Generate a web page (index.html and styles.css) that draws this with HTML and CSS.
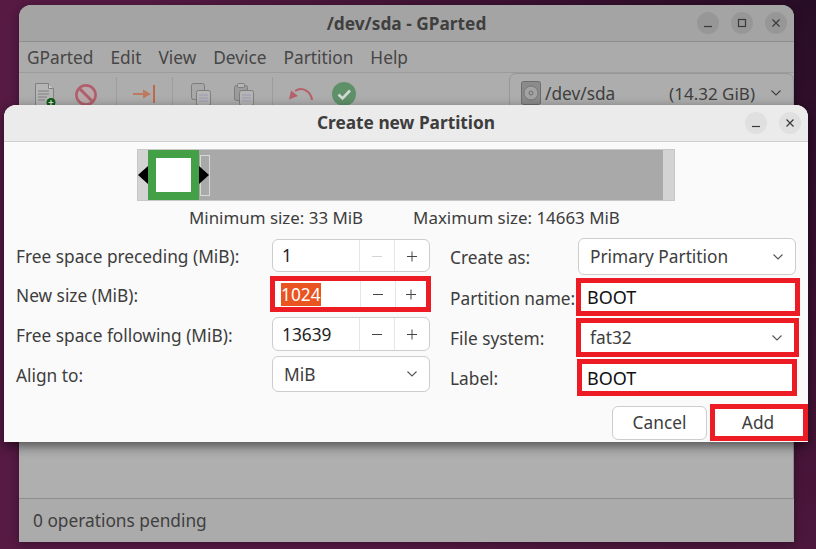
FILE: index.html
```html
<!DOCTYPE html>
<html lang="en">

<head>
    <meta charset="UTF-8">
    <title>/dev/sda - GParted</title>
    <link rel="stylesheet" href="styles.css">
</head>

<body>
    <div class="desktop">
        <div class="main-window">
            <div class="main-title">
                <span class="main-title-text">/dev/sda - GParted</span>
                <div class="win-buttons">
                    <span class="win-btn dark"><svg width="12" height="12" viewBox="0 0 12 12"><path d="M2 9.5h8" stroke="#3a3a3a" stroke-width="1.2"/></svg></span>
                    <span class="win-btn dark"><svg width="12" height="12" viewBox="0 0 12 12"><rect x="2.5" y="2.5" width="7" height="7" fill="none" stroke="#3a3a3a" stroke-width="1.2"/></svg></span>
                    <span class="win-btn dark"><svg width="12" height="12" viewBox="0 0 12 12"><path d="M2.5 2.5l7 7M9.5 2.5l-7 7" stroke="#3a3a3a" stroke-width="1.2"/></svg></span>
                </div>
            </div>
            <div class="menubar">
                <span>GParted</span><span>Edit</span><span>View</span><span>Device</span><span>Partition</span><span>Help</span>
            </div>
            <div class="toolbar">
                <svg class="tool tool-new" width="24" height="26" viewBox="0 0 24 26">
                    <path d="M1.5 1.5h13l5 5v18h-18z" fill="#b5b5b5" stroke="#808080"/>
                    <path d="M14.5 1.5v5h5" fill="#c8c8c8" stroke="#808080"/>
                    <path d="M4 9h11M4 12h11M4 15h9M4 18h7" stroke="#808080"/>
                    <circle cx="17" cy="20.5" r="4.5" fill="#0c5c12"/>
                    <path d="M14.5 20.5h5M17 18v5" stroke="#ddd" stroke-width="1.2"/>
                </svg>
                <svg class="tool tool-stop" width="22" height="22" viewBox="0 0 22 22">
                    <circle cx="11" cy="11" r="9.6" fill="#b9a9aa" stroke="#b0606c" stroke-width="2.6"/>
                    <path d="M4.5 4.5l13 13" stroke="#b0606c" stroke-width="3"/>
                </svg>
                <span class="tool-sep sep-a"></span>
                <svg class="tool tool-apply" width="22" height="18" viewBox="0 0 22 18">
                    <path d="M0 9h12" stroke="#bd7a5f" stroke-width="2"/>
                    <path d="M10 4.5l8 4.5-8 4.5z" fill="#bd7a5f"/>
                    <path d="M21 0v18" stroke="#bd6a4a" stroke-width="2"/>
                </svg>
                <span class="tool-sep sep-b"></span>
                <svg class="tool tool-copy" width="20" height="23" viewBox="0 0 20 23">
                    <rect x="0.5" y="0.5" width="13" height="16" rx="2" fill="#a8a8a8" stroke="#7d7d7d"/>
                    <rect x="5.5" y="7.5" width="14" height="15" rx="2" fill="#b5b5b5" stroke="#7d7d7d"/>
                    <path d="M8 12h9M8 15h9M8 18h9" stroke="#9a9ab5"/>
                </svg>
                <svg class="tool tool-paste" width="20" height="23" viewBox="0 0 20 23">
                    <rect x="0.5" y="2.5" width="13" height="15" rx="2" fill="#9c9c9c" stroke="#7d7d7d"/>
                    <rect x="3.5" y="0.5" width="7" height="4" rx="1" fill="#b5b5b5" stroke="#7d7d7d"/>
                    <rect x="5.5" y="7.5" width="14" height="15" rx="2" fill="#b5b5b5" stroke="#7d7d7d"/>
                    <path d="M8 12h9M8 15h9M8 18h9" stroke="#9a9ab5"/>
                </svg>
                <span class="tool-sep sep-c"></span>
                <svg class="tool tool-undo" width="24" height="13" viewBox="0 0 24 13">
                    <path d="M23 13C22 5 14-1 6 4" fill="none" stroke="#b5616a" stroke-width="2"/>
                    <path d="M0 12.500l2-9 7 5.500z" fill="#b5616a"/>
                </svg>
                <svg class="tool tool-ok" width="24" height="24" viewBox="0 0 24 24">
                    <circle cx="12" cy="12" r="12" fill="#5f9169"/>
                    <path d="M6.500 12.500l4 4 7.500-8" fill="none" stroke="#d3d9d3" stroke-width="2.600"/>
                </svg>
                <div class="device-combo">
                    <svg class="disk-icon" width="20" height="24" viewBox="0 0 20 24">
                        <rect x="0.5" y="0.5" width="19" height="23" rx="2" fill="#8b8b8b" stroke="#6d6d6d"/>
                        <circle cx="10" cy="12" r="7" fill="#a3a3a3" stroke="#777"/>
                        <circle cx="10" cy="12" r="2" fill="none" stroke="#6d6d6d"/>
                    </svg>
                    <span class="device-name">/dev/sda</span>
                    <span class="device-size">(14.32 GiB)</span>
                    <svg class="chevron" width="12" height="8" viewBox="0 0 12 8"><path d="M1.5 1.5l4.5 4.5 4.5-4.5" fill="none" stroke="#3f3f3f" stroke-width="1.1"/></svg>
                </div>
            </div>
            <div class="main-content"></div>
            <div class="statusbar">0 operations pending</div>
        </div>

        <div class="dialog">
            <div class="dialog-title">
                <span class="dialog-title-text">Create new Partition</span>
                <div class="win-buttons">
                    <span class="win-btn light"><svg width="12" height="12" viewBox="0 0 12 12"><path d="M2 9.5h8" stroke="#3a3a3a" stroke-width="1.2"/></svg></span>
                    <span class="win-btn light"><svg width="12" height="12" viewBox="0 0 12 12"><path d="M2.5 2.5l7 7M9.5 2.5l-7 7" stroke="#3a3a3a" stroke-width="1.2"/></svg></span>
                </div>
            </div>

            <div class="part-bar">
                <div class="part-left"><span class="arrow arrow-left"></span></div>
                <div class="part-used"><div class="part-inner"></div></div>
                <div class="part-free">
                    <span class="arrow arrow-right"></span>
                    <span class="part-ghost"></span>
                </div>
                <div class="part-end"></div>
            </div>

            <div class="sizes">
                <span>Minimum size: 33 MiB</span>
                <span>Maximum size: 14663 MiB</span>
            </div>

            <div class="form">
                <div class="form-col col-left">
                    <div class="row row-a">
                        <label>Free space preceding (MiB):</label>
                        <div class="spin">
                            <span class="spin-value">1</span>
                            <span class="spin-btn off"><svg width="12" height="12" viewBox="0 0 12 12"><path d="M1 6.500h10" stroke="#d4d4d4"/></svg></span>
                            <span class="spin-btn"><svg width="12" height="12" viewBox="0 0 12 12"><path d="M1 6.500h10M6 1.500v10" stroke="#444"/></svg></span>
                        </div>
                    </div>
                    <div class="row row-b">
                        <label>New size (MiB):</label>
                        <div class="spin marked">
                            <span class="spin-value"><span class="selected">1024</span></span>
                            <span class="spin-btn"><svg width="12" height="12" viewBox="0 0 12 12"><path d="M1 6.500h10" stroke="#444"/></svg></span>
                            <span class="spin-btn"><svg width="12" height="12" viewBox="0 0 12 12"><path d="M1 6.500h10M6 1.500v10" stroke="#444"/></svg></span>
                        </div>
                    </div>
                    <div class="row row-c">
                        <label>Free space following (MiB):</label>
                        <div class="spin">
                            <span class="spin-value">13639</span>
                            <span class="spin-btn"><svg width="12" height="12" viewBox="0 0 12 12"><path d="M1 6.500h10" stroke="#444"/></svg></span>
                            <span class="spin-btn"><svg width="12" height="12" viewBox="0 0 12 12"><path d="M1 6.500h10M6 1.500v10" stroke="#444"/></svg></span>
                        </div>
                    </div>
                    <div class="row row-d">
                        <label>Align to:</label>
                        <div class="combo align-combo">
                            <span>MiB</span>
                            <svg class="chevron" width="12" height="8" viewBox="0 0 12 8"><path d="M1.5 1.5l4.5 4.5 4.5-4.5" fill="none" stroke="#555" stroke-width="1.1"/></svg>
                        </div>
                    </div>
                </div>

                <div class="form-col col-right">
                    <div class="row row-e">
                        <label>Create as:</label>
                        <div class="combo create-combo">
                            <span>Primary Partition</span>
                            <svg class="chevron" width="12" height="8" viewBox="0 0 12 8"><path d="M1.5 1.5l4.5 4.5 4.5-4.5" fill="none" stroke="#555" stroke-width="1.1"/></svg>
                        </div>
                    </div>
                    <div class="row row-f">
                        <label>Partition name:</label>
                        <div class="red-box name-box">BOOT</div>
                    </div>
                    <div class="row row-g">
                        <label>File system:</label>
                        <div class="red-box fs-box">
                            <span>fat32</span>
                            <svg class="chevron" width="12" height="8" viewBox="0 0 12 8"><path d="M1.5 1.5l4.5 4.5 4.5-4.5" fill="none" stroke="#555" stroke-width="1.1"/></svg>
                        </div>
                    </div>
                    <div class="row row-h">
                        <label>Label:</label>
                        <div class="red-box label-box">BOOT</div>
                    </div>
                </div>
            </div>

            <div class="actions">
                <button class="btn-cancel">Cancel</button>
                <button class="btn-add">Add</button>
            </div>
        </div>
    </div>
</body>

</html>
```

FILE: styles.css
```css
* {
    box-sizing: border-box;
}

body {
    margin: 0;
    font-family: "Noto Sans", "Open Sans", sans-serif;
    font-size: 17.3px;
    color: #3d3d3d;
}

.desktop {
    position: relative;
    width: 816px;
    height: 549px;
    overflow: hidden;
    background:
        radial-gradient(circle at 100% 0, #280d26 0, #3b1130 30%, rgba(85, 26, 66, 0) 70%),
        #561a43;
}

/* background window, dimmed */
.main-window {
    position: absolute;
    left: 19px;
    top: 5px;
    width: 775px;
    height: 537px;
    display: flex;
    flex-direction: column;
    background: #adadad;
    border-radius: 12px 12px 0 0;
    box-shadow: 0 2px 8px rgba(0, 0, 0, 0.35);
    color: #3f3f3f;
}

.main-title {
    position: relative;
    height: 37px;
    flex: none;
    display: flex;
    align-items: center;
    justify-content: center;
    background: #a4a4a4;
    border-bottom: 1px solid #8e8e8e;
    border-radius: 12px 12px 0 0;
}

.main-title-text {
    font-weight: 700;
}

.win-buttons {
    position: absolute;
    right: 7px;
    top: 7px;
    display: flex;
    gap: 12px;
}

.win-btn {
    width: 22px;
    height: 22px;
    border-radius: 50%;
    display: flex;
    align-items: center;
    justify-content: center;
}

.win-btn.dark {
    background: #979797;
}

.win-btn.light {
    background: #e0e0e0;
}

.menubar {
    height: 31px;
    flex: none;
    display: flex;
    align-items: center;
    padding-left: 8px;
    gap: 17px;
    background: #ababab;
    border-bottom: 1px solid #9c9c9c;
    color: #464646;
}

.toolbar {
    position: relative;
    height: 64px;
    flex: none;
    background: #adadad;
}

/* toolbar icons sit at fixed spots, the dialog covers their lower part */
.tool {
    position: absolute;
}

.tool-new { left: 15px; top: 9px; }
.tool-stop { left: 56px; top: 11px; }
.tool-apply { left: 114px; top: 12px; }
.tool-copy { left: 172px; top: 10px; }
.tool-paste { left: 215px; top: 10px; }
.tool-undo { left: 270px; top: 14px; }
.tool-ok { left: 313px; top: 9px; }

.tool-sep {
    position: absolute;
    top: 4px;
    width: 1px;
    height: 28px;
    background: #9d9d9d;
}

.sep-a { left: 97px; }
.sep-b { left: 153px; }
.sep-c { left: 253px; }

.device-combo {
    position: absolute;
    left: 490px;
    top: 0;
    width: 285px;
    height: 40px;
    display: flex;
    align-items: center;
    padding: 0 11px;
    border: 1px solid #979797;
    border-radius: 7px;
    background: #adadad;
}

.disk-icon {
    flex: none;
    margin-right: 4px;
}

.device-name {
    flex: 1;
}

.device-size {
    margin-right: 15px;
    font-size: 17px;
}

.main-content {
    flex: 1;
    background: #afafaf;
    border-right: 1px solid #8e8e8e;
}

.statusbar {
    height: 44px;
    flex: none;
    display: flex;
    align-items: center;
    padding-left: 14px;
    background: #ababab;
    border-top: 1px solid #8e8e8e;
}

/* the dialog */
.dialog {
    position: absolute;
    left: 4px;
    top: 105px;
    width: 804px;
    height: 337px;
    background: #fafafa;
    border-radius: 12px 12px 0 0;
    box-shadow: 0 4px 12px rgba(0, 0, 0, 0.55);
}

.dialog-title {
    position: relative;
    height: 37px;
    display: flex;
    align-items: center;
    justify-content: center;
    padding-bottom: 2px;
    background: #ebebeb;
    border-bottom: 1px solid #cfcfcf;
    border-radius: 12px 12px 0 0;
}

.dialog-title-text {
    font-weight: 700;
    color: #3d3d3d;
}

.part-bar {
    display: flex;
    width: 538px;
    height: 52px;
    margin: 7px 0 0 133px;
    border: 1px solid #c8c8c8;
}

.part-left {
    position: relative;
    width: 10px;
    background: #d3d3d3;
}

.part-used {
    width: 51px;
    padding: 8px;
    background: #43a047;
}

.part-inner {
    height: 100%;
    background: #fff;
}

.part-free {
    position: relative;
    flex: 1;
    background: #a9a9a9;
}

.part-end {
    width: 11px;
    background: #d3d3d3;
}

.part-ghost {
    position: absolute;
    left: 1px;
    top: 5px;
    width: 10px;
    height: 41px;
    border: 1px solid #d8d8d8;
}

.arrow {
    position: absolute;
    top: 16px;
    width: 0;
    height: 0;
    border-top: 9px solid transparent;
    border-bottom: 9px solid transparent;
}

.arrow-left {
    left: 0;
    border-right: 10px solid #000;
}

.arrow-right {
    left: 0;
    border-left: 10px solid #000;
    z-index: 1;
}

.sizes {
    display: flex;
    gap: 50px;
    margin: 6px 0 0 185px;
    height: 22px;
    line-height: 22px;
    font-size: 16.9px;
}

.form {
    display: flex;
    margin-top: 10px;
    padding-left: 12px;
}

.form-col {
    display: flex;
    flex-direction: column;
}

.col-left {
    width: 434px;
}

.row {
    display: flex;
    align-items: center;
}

.row label {
    padding-top: 2px;
}

.col-left label {
    width: 256px;
    flex: none;
}

.col-right label {
    width: 128px;
    flex: none;
}

.row-a { height: 33px; }
.row-b { height: 36px; margin-top: 4px; }
.row-c { height: 34px; margin-top: 5px; }
.row-d { height: 36px; margin-top: 5px; }

.row-e { height: 37px; margin-top: -1px; }
.row-f { height: 38px; margin-top: 3px; }
.row-g { height: 39px; margin-top: 2px; }
.row-h { height: 37px; margin-top: 2px; }

.spin {
    width: 158px;
    height: 100%;
    display: flex;
    align-items: center;
    background: #fff;
    border: 1px solid #cdcdcd;
    border-radius: 6px;
}

.spin.marked {
    width: 161px;
    margin-left: -2px;
    border: 5px solid #ed1c24;
    border-radius: 0;
}

.spin-value {
    flex: 1;
    padding-left: 9px;
    color: #1e1e1e;
}

.spin.marked .spin-value {
    padding-left: 6px;
}

.selected {
    display: inline-block;
    background: #e95420;
    color: #fff;
    height: 23px;
    line-height: 23px;
}

.spin-btn {
    width: 35px;
    flex: none;
    height: 100%;
    display: flex;
    align-items: center;
    justify-content: center;
    border-left: 1px solid #e6e6e6;
}

.spin.marked .spin-btn {
    width: 35px;
}

.spin.marked .spin-btn:last-child {
    width: 31px;
}

.combo {
    height: 100%;
    display: flex;
    align-items: center;
    justify-content: space-between;
    padding: 0 11px;
    background: #fff;
    border: 1px solid #cdcdcd;
    border-radius: 6px;
}

.align-combo {
    width: 158px;
}

.create-combo {
    width: 218px;
}

.red-box {
    display: flex;
    align-items: center;
    justify-content: space-between;
    height: 100%;
    background: #fff;
    border: 5px solid #ed1c24;
    color: #111;
    font-size: 18px;
    padding: 0 12px 0 6px;
}

.name-box {
    width: 224px;
    margin-left: -2px;
}

.fs-box {
    width: 223px;
    margin-left: -2px;
    color: #3d3d3d;
    font-size: 17.3px;
    padding: 0 11px 0 9px;
}

.label-box {
    width: 220px;
    margin-left: -1px;
    padding-left: 5px;
}

.actions {
    display: flex;
    justify-content: flex-end;
    align-items: center;
    gap: 3px;
    margin-top: 8px;
}

.actions button {
    font: inherit;
    color: #3d3d3d;
    background: #fff;
}

.btn-cancel {
    width: 95px;
    height: 34px;
    border: 1px solid #cdcdcd;
    border-radius: 6px;
}

.btn-add {
    width: 98px;
    height: 37px;
    border: 5px solid #ed1c24;
    padding: 0 2px 0 0;
}
```
